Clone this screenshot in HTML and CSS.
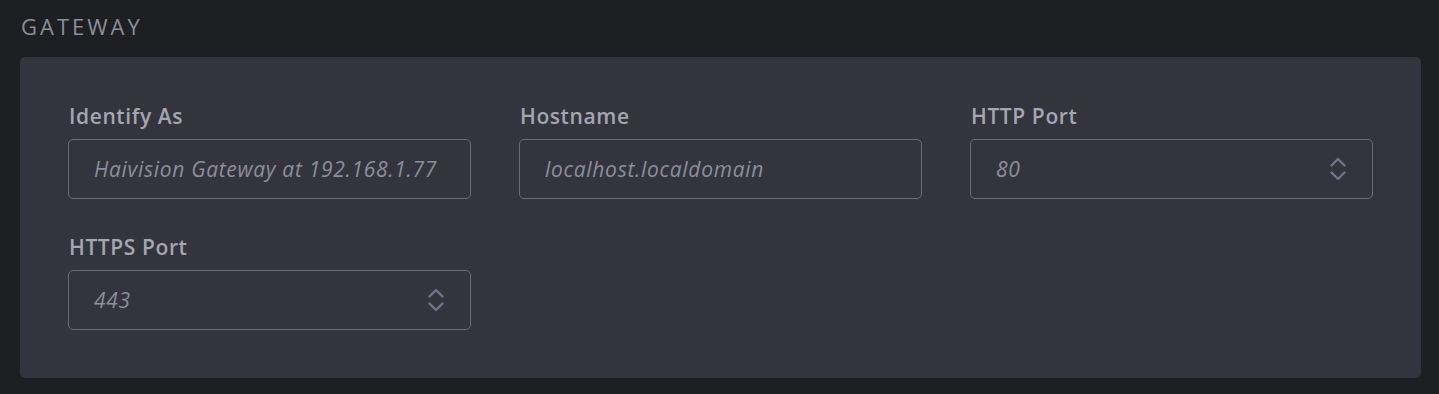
FILE: index.html
```html
<!doctype html>
<html lang="en">
<head>
    <meta charset="utf-8">
    <meta name="viewport" content="width=device-width, initial-scale=1.0">
    <title>Gateway</title>
    <link rel="stylesheet" href="styles.css">
</head>

<body>
    <h2 class="section-title">GATEWAY</h2>
    <div class="panel">
        <div class="form-grid">
            <div class="form-group">
                <label for="identifyAs">Identify As</label>
                <div class="field">
                    <input type="text" id="identifyAs" placeholder="Haivision Gateway at 192.168.1.77">
                </div>
            </div>
            <div class="form-group">
                <label for="hostname">Hostname</label>
                <div class="field">
                    <input type="text" id="hostname" placeholder="localhost.localdomain">
                </div>
            </div>
            <div class="form-group">
                <label for="httpPort">HTTP Port</label>
                <div class="field">
                    <input type="text" id="httpPort" placeholder="80">
                    <svg class="spinner" width="18" height="26" viewBox="0 0 18 26">
                        <path d="M2.5 9.5 L9 3 L15.5 9.5 M2.5 16.5 L9 23 L15.5 16.5" fill="none" stroke="#72748a" stroke-width="2.4" stroke-linecap="round" stroke-linejoin="round"/>
                    </svg>
                </div>
            </div>
            <div class="form-group">
                <label for="httpsPort">HTTPS Port</label>
                <div class="field">
                    <input type="text" id="httpsPort" placeholder="443">
                    <svg class="spinner" width="18" height="26" viewBox="0 0 18 26">
                        <path d="M2.5 9.5 L9 3 L15.5 9.5 M2.5 16.5 L9 23 L15.5 16.5" fill="none" stroke="#72748a" stroke-width="2.4" stroke-linecap="round" stroke-linejoin="round"/>
                    </svg>
                </div>
            </div>
        </div>
    </div>
</body>
</html>
```

FILE: styles.css
```css
body {
    font-family: "Open Sans", "Liberation Sans", sans-serif;
    background-color: #1e1f22;
    margin: 0;
    padding: 0 18px 0 20px;
}
.section-title {
    margin: 0;
    padding: 11px 0 0 1px;
    height: 57px;
    box-sizing: border-box;
    font-size: 22px;
    line-height: 30px;
    font-weight: 500;
    letter-spacing: 3px;
    color: #8b8e9b;
}
.panel {
    background: #33343d;
    border-radius: 5px;
    padding: 45px 48px 48px;
    margin-bottom: 16px;
}
.form-grid {
    display: grid;
    grid-template-columns: repeat(3, 1fr);
    column-gap: 48px;
    row-gap: 34px;
}
.form-group label {
    display: block;
    margin-bottom: 8px;
    padding-left: 1px;
    font-size: 21px;
    line-height: 29px;
    font-weight: 600;
    letter-spacing: 0.6px;
    color: #a4a6b2;
}
.field {
    position: relative;
    height: 60px;
    box-sizing: border-box;
    border: 1px solid #6a6c79;
    border-radius: 5px;
}
.field input {
    width: 100%;
    height: 100%;
    box-sizing: border-box;
    background: transparent;
    border: none;
    outline: none;
    padding: 0 25px;
    font-family: inherit;
    font-size: 21px;
    font-style: italic;
    letter-spacing: 0.7px;
    color: #d0d2da;
}
.field input::placeholder {
    color: #8c8e9b;
}
.spinner {
    position: absolute;
    right: 25px;
    top: 16px;
}
```
